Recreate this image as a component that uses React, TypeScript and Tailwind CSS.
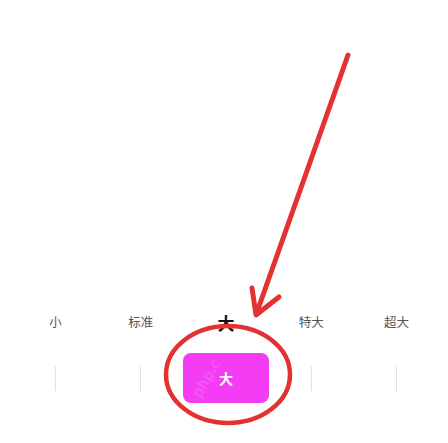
import React from "react";

const LABELS = ["小", "标准", "大", "特大", "超大"];
const SELECTED = 2;

export default function App() {
  return (
    <div
      className="relative w-[448px] h-[443px] overflow-hidden bg-white"
      style={{ fontFamily: '"Noto Sans CJK SC", "Noto Sans", sans-serif' }}
    >
      <div className="pl-[13px] pr-[9px] pt-[310px]">
        {/* size labels */}
        <div className="grid grid-cols-5 h-6 items-center text-center">
          {LABELS.map((label, i) => (
            <span
              key={label}
              className={
                i === SELECTED
                  ? "text-[17px] font-bold text-[#111] leading-none"
                  : "text-[12.5px] text-[#555] leading-none"
              }
            >
              {label}
            </span>
          ))}
        </div>

        {/* slider track */}
        <div className="grid grid-cols-5 mt-[19px] h-[50px] items-center">
          {LABELS.map((label, i) => (
            <div key={label} className="flex justify-center">
              {i === SELECTED ? (
                <div className="relative w-[86px] h-[50px] rounded-lg bg-[#f43cf4] flex items-center justify-center overflow-hidden">
                  <span className="absolute left-[2px] top-[14px] -rotate-[60deg] text-[15px] font-bold text-white/15">
                    php.c
                  </span>
                  <span className="relative text-[14px] font-bold text-white">{label}</span>
                </div>
              ) : (
                <div className="w-px h-[25px] bg-[#e2e2e2]" />
              )}
            </div>
          ))}
        </div>
      </div>

      {/* annotation */}
      <svg className="absolute inset-0 pointer-events-none" width="448" height="443" viewBox="0 0 448 443">
        <ellipse cx="228" cy="374.5" rx="62" ry="48.5" fill="none" stroke="#e23232" strokeWidth="4.5" />
        <path d="M348 55 L257 312" stroke="#e23232" strokeWidth="5" strokeLinecap="round" fill="none" />
        <path d="M252 288 L256 315 L279 297" stroke="#e23232" strokeWidth="5" strokeLinecap="round" strokeLinejoin="round" fill="none" />
      </svg>
    </div>
  );
}
